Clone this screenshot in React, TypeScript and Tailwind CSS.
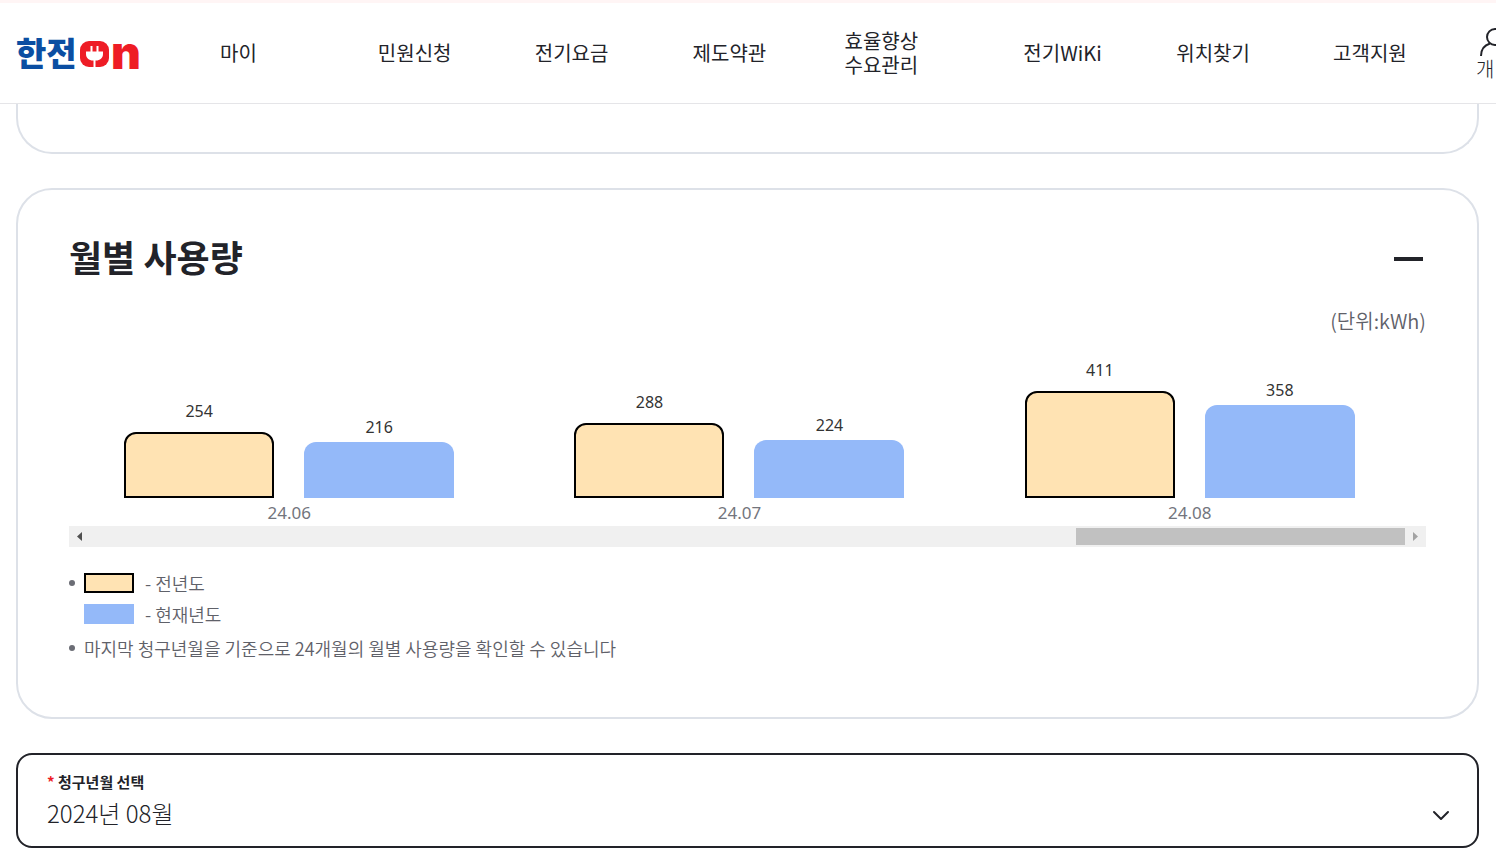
import { useState } from "react";
import clsx from "clsx";

const menus = [
  { label: "마이" },
  { label: "민원신청" },
  { label: "전기요금" },
  { label: "제도약관" },
  { label: "효율향상 수요관리", wrap: true },
  { label: "전기WiKi" },
  { label: "위치찾기" },
  { label: "고객지원" },
];

const usage = [
  { month: "24.06", lastYear: 254, thisYear: 216 },
  { month: "24.07", lastYear: 288, thisYear: 224 },
  { month: "24.08", lastYear: 411, thisYear: 358 },
];

// px per kWh
const SCALE = 0.26;

function Logo() {
  return (
    <a href="#" className="flex h-8 items-center pb-[2px]">
      <span className="w-[63px] text-[33px] leading-8 font-black whitespace-nowrap text-[#0b4ea2]">
        한전
      </span>
      <svg
        width="32"
        height="26"
        viewBox="0 0 32 26"
        className="mt-1 shrink-0"
        aria-hidden="true"
      >
        <rect x="1" y="0" width="29" height="26" rx="9" fill="#ee1c25" />
        <path
          d="M11.500 5h2v5.500h4V5h2v5.500H24v2.500c0 4-3 6.500-7 6.500h-3C10 19.500 7 17 7 13v-2.500h4.500z"
          fill="#fff"
        />
        <path d="M15.500 19v7" stroke="#fff" strokeWidth="2" />
      </svg>
      <span className="font-[Inter,sans-serif] text-[46px] leading-7 font-black text-[#ee1c25]">
        n
      </span>
    </a>
  );
}

function Header() {
  return (
    <header className="flex h-[104px] items-center overflow-hidden border-t-3 border-b border-t-[#fff5f5] border-b-[#e5e5e8] bg-white pl-4">
      <div className="w-[204px] shrink-0">
        <Logo />
      </div>
      <nav className="flex-1">
        <ul className="grid grid-cols-[158fr_157fr_158fr_152fr_179fr_153fr_157fr_143fr] items-center text-xl leading-6">
          {menus.map((menu) => (
            <li key={menu.label}>
              <a
                href="#"
                className={clsx("block", menu.wrap ? "w-20" : "whitespace-nowrap")}
              >
                {menu.label}
              </a>
            </li>
          ))}
        </ul>
      </nav>
      <a href="#" className="w-5 shrink-0 text-xl leading-6 font-light">
        <svg
          width="32"
          height="32"
          viewBox="0 0 32 32"
          fill="none"
          stroke="#222329"
          strokeWidth="2"
          className="ml-1 max-w-none"
          aria-hidden="true"
        >
          <circle cx="15" cy="12" r="8" />
          <path d="M1 31c0-7 4-11 9-12.500M29 31c0-7-4-11-9-12.500" />
        </svg>
        개
      </a>
    </header>
  );
}

type BarProps = { value: number; last?: boolean };

function Bar({ value, last }: BarProps) {
  return (
    <div className="w-[150px] text-center">
      <p className={clsx("leading-5 text-[#333]", last ? "mb-[11px]" : "mb-[5px]")}>
        {value}
      </p>
      <div
        className={clsx(
          "rounded-t-xl",
          last ? "border-2 border-black bg-[#ffe3b3]" : "bg-[#94b9f9]"
        )}
        style={{ height: Math.round(value * SCALE) }}
      />
    </div>
  );
}

function ScrollBar() {
  return (
    <div className="flex h-[21px] items-center bg-[#f0f0f0]" aria-hidden="true">
      <svg width="21" height="21" viewBox="0 0 21 21">
        <path d="M8 10.500 13 6v9z" fill="#505050" />
      </svg>
      <div className="flex-1" />
      <div className="h-[17px] w-[329px] bg-[#c1c1c1]" />
      <svg width="21" height="21" viewBox="0 0 21 21">
        <path d="M13 10.500 8 6v9z" fill="#a3a3a3" />
      </svg>
    </div>
  );
}

function Bullet() {
  return <span className="size-[6px] shrink-0 rounded-full bg-[#6b6d75]" />;
}

function MonthlyUsage() {
  const [open, setOpen] = useState(true);

  return (
    <section className="rounded-[36px] border-2 border-[#dde1e8] px-[51px] pt-10 pb-[54px]">
      <div className="flex items-end justify-between">
        <h2 className="text-4xl leading-[52px] font-bold">월별 사용량</h2>
        <button
          type="button"
          aria-label="월별 사용량 접기"
          aria-expanded={open}
          onClick={() => setOpen(!open)}
          className="px-[3px] py-[21px]"
        >
          <span className="block h-1 w-[29px] bg-[#222329]" />
        </button>
      </div>
      {open && (
        <>
          <p className="mt-6 text-right text-xl leading-[30px] font-[350] text-[#5f6169]">
            (단위:kWh)
          </p>
          <div className="mr-[11px] -ml-[5px] grid h-[190px] grid-cols-3 items-end font-['Noto_Sans',sans-serif]">
            {usage.map((item) => (
              <div key={item.month}>
                <div className="flex items-end justify-center gap-[30px]">
                  <Bar value={item.lastYear} last />
                  <Bar value={item.thisYear} />
                </div>
                <p className="pt-[2px] text-center text-[17px] leading-[26px] text-[#73757d]">
                  {item.month}
                </p>
              </div>
            ))}
          </div>
          <ScrollBar />
          <ul className="mt-[21px] text-lg leading-[30px] font-[350] text-[#5f6169]">
            <li className="flex items-center">
              <Bullet />
              <span className="mr-[11px] ml-[9px] h-5 w-[50px] border-2 border-black bg-[#ffe3b3]" />
              - 전년도
            </li>
            <li className="mt-px flex items-center pl-[15px]">
              <span className="mr-[11px] h-5 w-[50px] bg-[#94b9f9]" />
              - 현재년도
            </li>
            <li className="mt-1 flex items-center gap-[9px]">
              <Bullet />
              마지막 청구년월을 기준으로 24개월의 월별 사용량을 확인할 수 있습니다
            </li>
          </ul>
        </>
      )}
    </section>
  );
}

function MonthSelect() {
  return (
    <div className="flex items-end rounded-2xl border-2 border-[#222329] pt-[15px] pr-[27px] pb-[14px] pl-[29px]">
      <div className="flex-1">
        <label htmlFor="month" className="block text-[15px] leading-6 font-bold">
          <span className="text-[#ee1c25]">*</span> 청구년월 선택
        </label>
        <select
          id="month"
          className="h-[38px] w-full appearance-none bg-transparent text-2xl leading-[38px] font-light"
        >
          <option>2024년 08월</option>
        </select>
      </div>
      <svg
        width="18"
        height="38"
        viewBox="0 0 18 38"
        fill="none"
        stroke="#222329"
        strokeWidth="2"
        strokeLinecap="round"
        strokeLinejoin="round"
        aria-hidden="true"
      >
        <path d="m2 18 7 7 7-7" />
      </svg>
    </div>
  );
}

export default function App() {
  return (
    <div className="min-h-screen overflow-x-hidden bg-white font-['Noto_Sans_CJK_KR',sans-serif] text-[#222329]">
      <Header />
      <main className="flex flex-col gap-[34px] pr-[17px] pb-[15px] pl-4">
        <div className="h-[50px] rounded-b-[36px] border-2 border-t-0 border-[#dde1e8]" />
        <MonthlyUsage />
        <MonthSelect />
      </main>
    </div>
  );
}
